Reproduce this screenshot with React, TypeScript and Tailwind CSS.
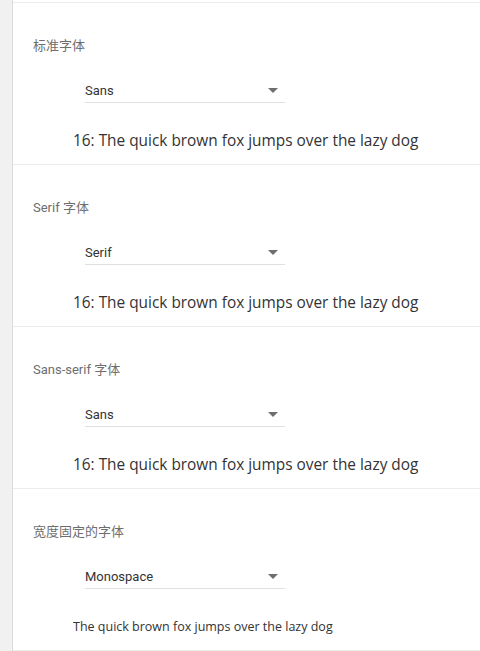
import React from "react";

function Select({ value }: { value: string }) {
  return (
    <div className="ml-[72px] flex h-[24px] w-[200px] items-center justify-between border-b border-[#e0e0e0] text-[13px] text-[#333]" style={{ fontFamily: "Roboto, sans-serif" }}>
      <span>{value}</span>
      <svg width="10" height="5" viewBox="0 0 10 5" className="mr-[7px]">
        <path d="M0 0 L10 0 L5 5 Z" fill="#6e6e6e" />
      </svg>
    </div>
  );
}

function Section({ label, value, sample, small }: { label: string; value: string; sample: string; small?: boolean }) {
  return (
    <div className="flex flex-col border-b border-[#ececec] pt-[33px] pb-[11px]">
      <div className="ml-[20px] h-[20px] text-[13px] leading-[20px] text-[#6e6e6e]" style={{ fontFamily: "Roboto, 'Noto Sans CJK SC', sans-serif" }}>
        {label}
      </div>
      <div className="mt-[23px]">
        <Select value={value} />
      </div>
      <div
        className={`ml-[60px] mt-[26px] h-[24px] leading-[24px] text-[#333] ${small ? "text-[12.5px]" : "text-[15.4px]"}`}
        style={{ fontFamily: "'Open Sans', sans-serif" }}
      >
        {sample}
      </div>
    </div>
  );
}

export default function App() {
  return (
    <div className="flex h-[651px] w-[480px] overflow-hidden bg-[#f1f1f1]">
      <div className="w-[13px] shrink-0 border-r border-[#dcdcdc] bg-[#f1f1f1]" />
      <div className="flex flex-1 flex-col bg-white">
        <div className="h-[4px] border-b border-[#ececec] bg-white" />
        <Section label="标准字体" value="Sans" sample="16: The quick brown fox jumps over the lazy dog" />
        <Section label="Serif 字体" value="Serif" sample="16: The quick brown fox jumps over the lazy dog" />
        <Section label="Sans-serif 字体" value="Sans" sample="16: The quick brown fox jumps over the lazy dog" />
        <Section label="宽度固定的字体" value="Monospace" sample="The quick brown fox jumps over the lazy dog" small />
      </div>
    </div>
  );
}
